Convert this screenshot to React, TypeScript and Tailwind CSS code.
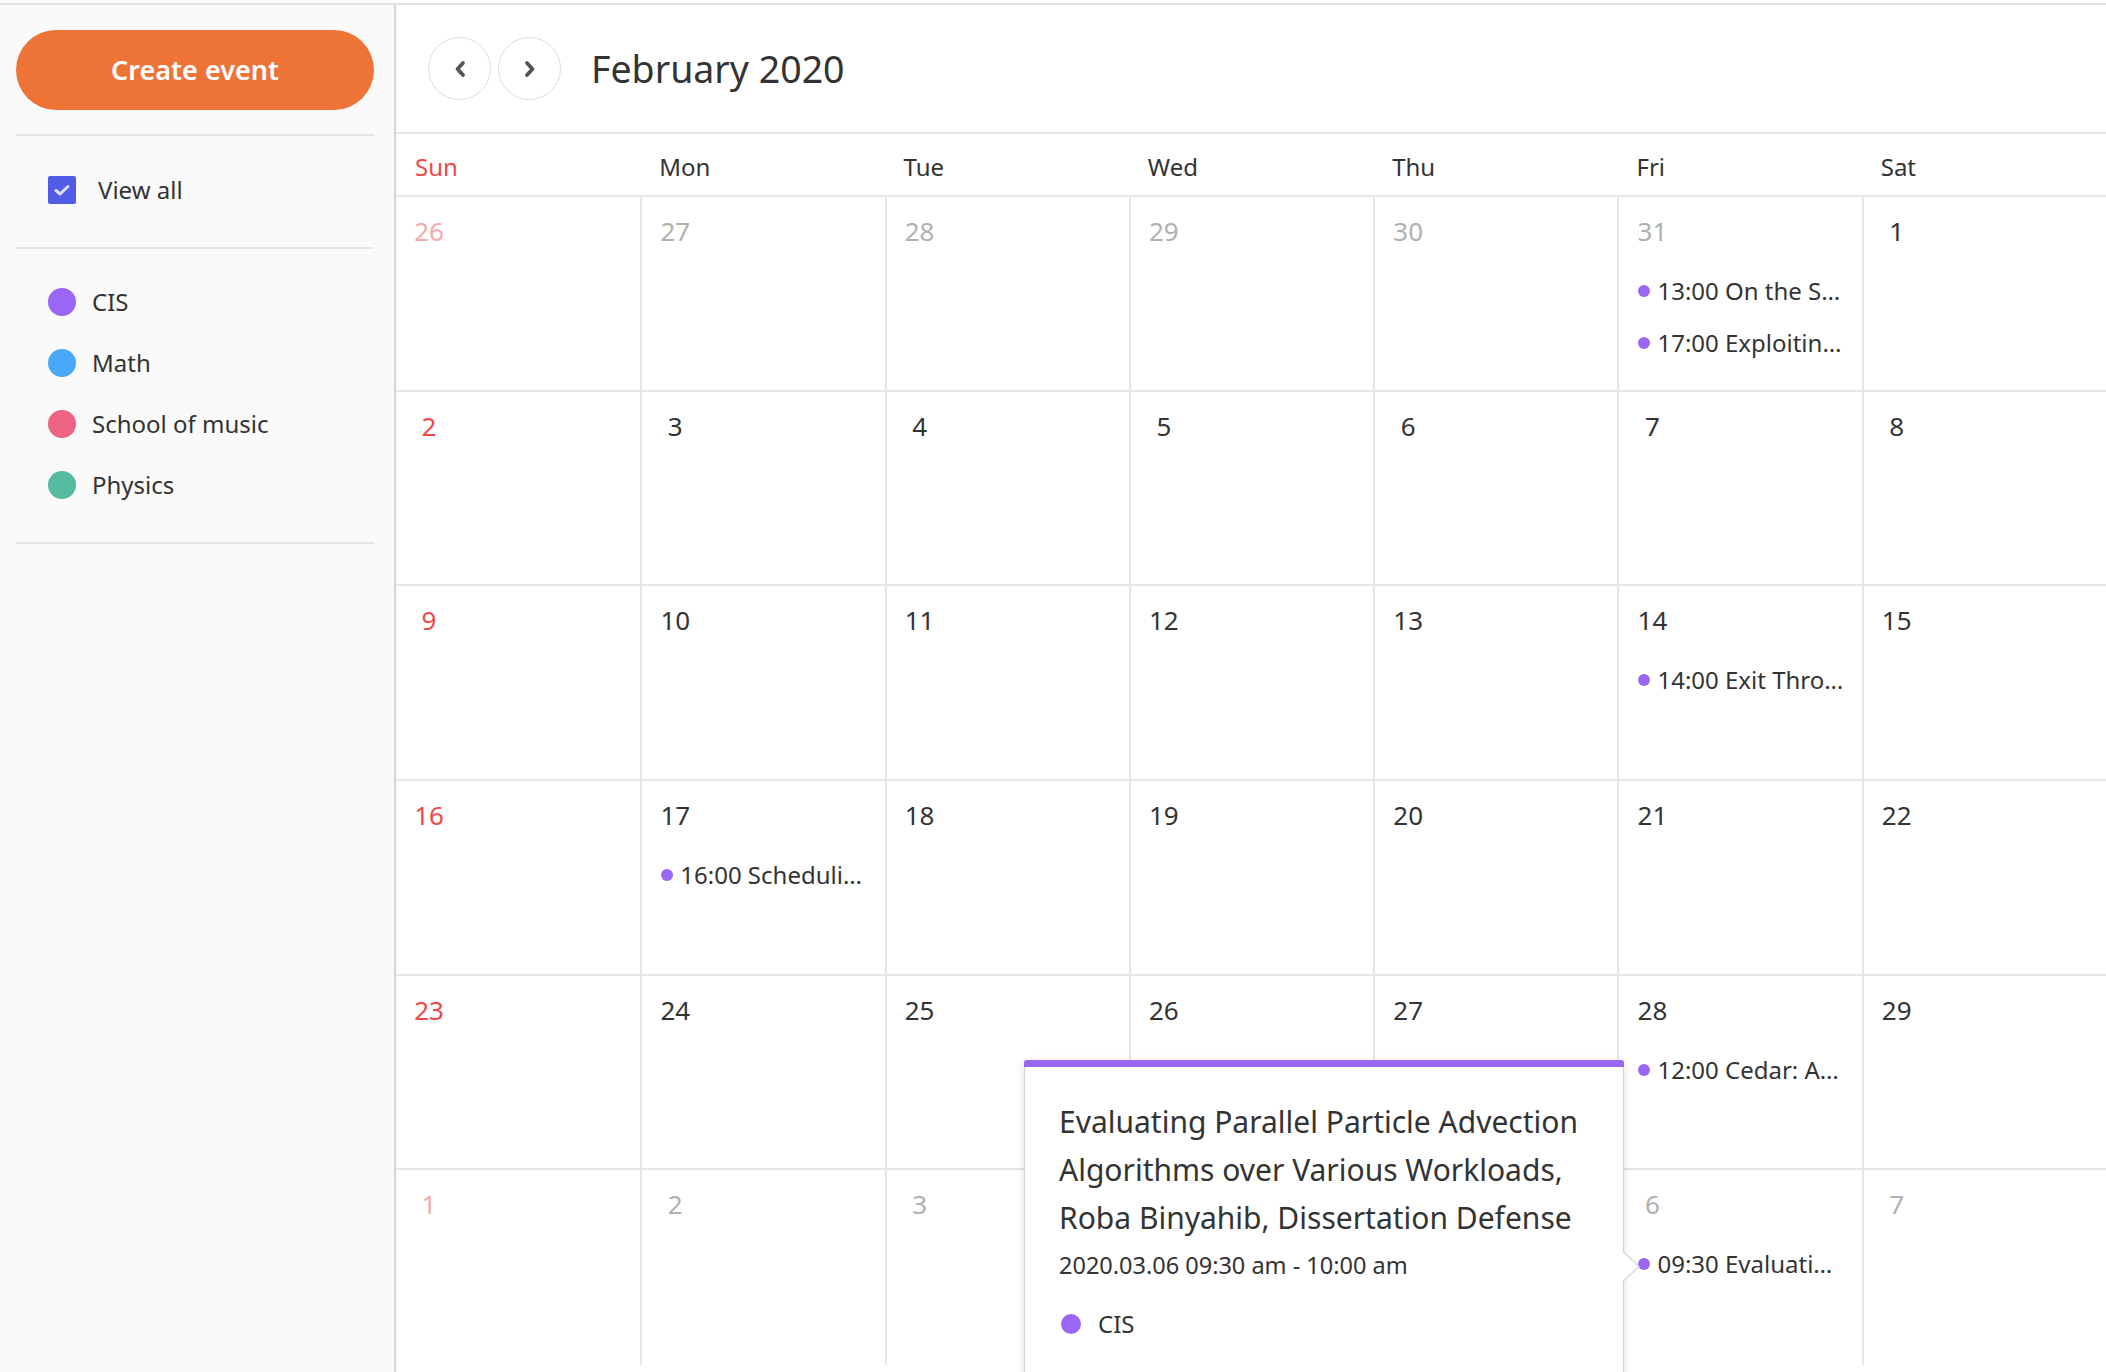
import React from "react";

type Day = { n: number; tone: "cur" | "other" | "sun" | "sunOther"; events?: string[] };

const rows: Day[][] = [
  [
    { n: 26, tone: "sunOther" },
    { n: 27, tone: "other" },
    { n: 28, tone: "other" },
    { n: 29, tone: "other" },
    { n: 30, tone: "other" },
    { n: 31, tone: "other", events: ["13:00 On the S…", "17:00 Exploitin…"] },
    { n: 1, tone: "cur" },
  ],
  [2, 3, 4, 5, 6, 7, 8].map((n, i) => ({ n, tone: i === 0 ? "sun" : "cur" })),
  [9, 10, 11, 12, 13, 14, 15].map((n, i) => ({
    n,
    tone: i === 0 ? "sun" : "cur",
    events: n === 14 ? ["14:00 Exit Thro…"] : undefined,
  })),
  [16, 17, 18, 19, 20, 21, 22].map((n, i) => ({
    n,
    tone: i === 0 ? "sun" : "cur",
    events: n === 17 ? ["16:00 Scheduli…"] : undefined,
  })),
  [23, 24, 25, 26, 27, 28, 29].map((n, i) => ({
    n,
    tone: i === 0 ? "sun" : "cur",
    events: n === 28 ? ["12:00 Cedar: A…"] : undefined,
  })),
  [1, 2, 3, 4, 5, 6, 7].map((n, i) => ({
    n,
    tone: i === 0 ? "sunOther" : "other",
    events: n === 6 ? ["09:30 Evaluati…"] : undefined,
  })),
] as Day[][];

const toneClass: Record<Day["tone"], string> = {
  cur: "text-[#333333]",
  other: "text-[#b0b0b0]",
  sun: "text-[#f04848]",
  sunOther: "text-[#f5a9a9]",
};

const dayNames = ["Sun", "Mon", "Tue", "Wed", "Thu", "Fri", "Sat"];

const calendars = [
  { name: "CIS", color: "bg-[#9a67f5]" },
  { name: "Math", color: "bg-[#4aa8f9]" },
  { name: "School of music", color: "bg-[#ec6383]" },
  { name: "Physics", color: "bg-[#55bba0]" },
];

function Chevron({ dir }: { dir: "left" | "right" }) {
  return (
    <svg width="14" height="20" viewBox="0 0 14 20">
      <polyline
        points={dir === "left" ? "10,4 4.5,10 10,16" : "4,4 9.5,10 4,16"}
        fill="none"
        stroke="#555555"
        strokeWidth="3.8"
        strokeLinecap="round"
        strokeLinejoin="round"
      />
    </svg>
  );
}

export default function App() {
  return (
    <div
      className="relative h-[1372px] w-[2106px] overflow-hidden bg-white text-[#333333]"
      style={{ fontFamily: '"Noto Sans", "Open Sans", sans-serif' }}
    >
      <div className="h-[3px] bg-white" />
      <div className="h-[2px] bg-[#e2e2e2]" />
      <div className="flex h-[1367px]">
        {/* Sidebar */}
        <aside className="w-[396px] shrink-0 border-r-2 border-[#d6d6d6] bg-[#fafafa] pl-4 pr-5">
          <button className="mt-[25px] flex h-[80px] w-full items-center justify-center rounded-full bg-[#ee7337] text-[27px] font-semibold text-white">
            Create event
          </button>
          <div className="mt-[24px] h-[2px] bg-[#e6e6e6]" />
          <div className="flex h-[111px] items-center pb-[4px] pl-8">
            <div className="flex h-[28px] w-[28px] items-center justify-center rounded-[2px] bg-[#515ce6]">
              <svg width="18" height="14" viewBox="0 0 18 14">
                <polyline
                  points="3,7.5 7,11 15,3.5"
                  fill="none"
                  stroke="#dfe2ff"
                  strokeWidth="3"
                  strokeLinecap="round"
                  strokeLinejoin="round"
                />
              </svg>
            </div>
            <span className="ml-[22px] text-[24px]">View all</span>
          </div>
          <div className="h-[2px] bg-[#e6e6e6]" />
          <div className="pt-[22px] pb-[27px] pl-8">
            {calendars.map((c) => (
              <div key={c.name} className="flex h-[61px] items-center gap-4">
                <span className={`h-[28px] w-[28px] rounded-full ${c.color}`} />
                <span className="text-[24px]">{c.name}</span>
              </div>
            ))}
          </div>
          <div className="h-[2px] bg-[#e6e6e6]" />
        </aside>

        {/* Main calendar */}
        <main className="flex flex-1 flex-col">
          <div className="flex h-[129px] items-center border-b-2 border-[#e6e6e6] pl-8">
            <button className="flex h-[63px] w-[63px] items-center justify-center rounded-full border border-[#dddddd] bg-white">
              <Chevron dir="left" />
            </button>
            <button className="ml-[7px] flex h-[63px] w-[63px] items-center justify-center rounded-full border border-[#dddddd] bg-white">
              <Chevron dir="right" />
            </button>
            <h1 className="ml-[30px] text-[37.5px] font-normal leading-none text-[#333333]">February 2020</h1>
          </div>
          <div className="grid h-[63px] grid-cols-7 border-b-2 border-[#e6e6e6]">
            {dayNames.map((d, i) => (
              <div
                key={d}
                className={`flex items-center pl-[19px] pt-[5px] text-[24px] ${i === 0 ? "text-[#f04848]" : "text-[#333333]"}`}
              >
                {d}
              </div>
            ))}
          </div>
          <div className="grid h-[1168px] grid-cols-7 grid-rows-6">
            {rows.map((row, ri) =>
              row.map((day, ci) => (
                <div
                  key={`${ri}-${ci}`}
                  className={`${ci > 0 ? "border-l-2" : ""} ${ri < 5 ? "border-b-2" : ""} border-[#e6e6e6] pt-4`}
                >
                  <div className="pl-[18px]">
                    <div className={`h-9 w-[30px] text-center text-[26px] leading-9 ${toneClass[day.tone]}`}>{day.n}</div>
                  </div>
                  <div className="mt-4">
                    {(day.events ?? []).map((e) => (
                      <div key={e} className="flex h-[52px] items-center gap-[7px] pl-[19px] text-[24px] text-[#333333]">
                        <span className="h-3 w-3 shrink-0 rounded-full bg-[#9a67f5]" />
                        <span className="whitespace-nowrap">{e}</span>
                      </div>
                    ))}
                  </div>
                </div>
              ))
            )}
          </div>
        </main>
      </div>

      {/* Popup */}
      <div className="absolute left-[1024px] top-[1060px] h-[340px] w-[600px] rounded-t-[3px] border border-t-0 border-[#d5d5d5] bg-white shadow-[0_2px_8px_rgba(0,0,0,0.12)]">
        <div className="-mx-px h-[7px] rounded-t-[3px] bg-[#9a67f5]" />
        <div className="pl-[34px] pt-[31px]">
          <div className="text-[30px] leading-[48px] text-[#333333]">
            <div className="whitespace-nowrap">Evaluating Parallel Particle Advection</div>
            <div className="whitespace-nowrap">Algorithms over Various Workloads,</div>
            <div className="whitespace-nowrap">Roba Binyahib, Dissertation Defense</div>
          </div>
          <div className="mt-[5px] text-[23.5px] leading-9 text-[#333333]">2020.03.06 09:30 am - 10:00 am</div>
          <div className="mt-[23px] flex h-9 items-center gap-[17px]">
            <span className="ml-[2px] h-5 w-5 rounded-full bg-[#9a67f5]" />
            <span className="text-[24px] text-[#333333]">CIS</span>
          </div>
        </div>
      </div>
      <svg className="absolute left-[1622px] top-[1251px]" width="20" height="31" viewBox="0 0 20 31">
        <polygon points="0,0 17,15.5 0,31" fill="#ffffff" />
        <polyline points="1,0.5 17,15.5 1,30.5" fill="none" stroke="#d5d5d5" strokeWidth="1.2" />
      </svg>
    </div>
  );
}
